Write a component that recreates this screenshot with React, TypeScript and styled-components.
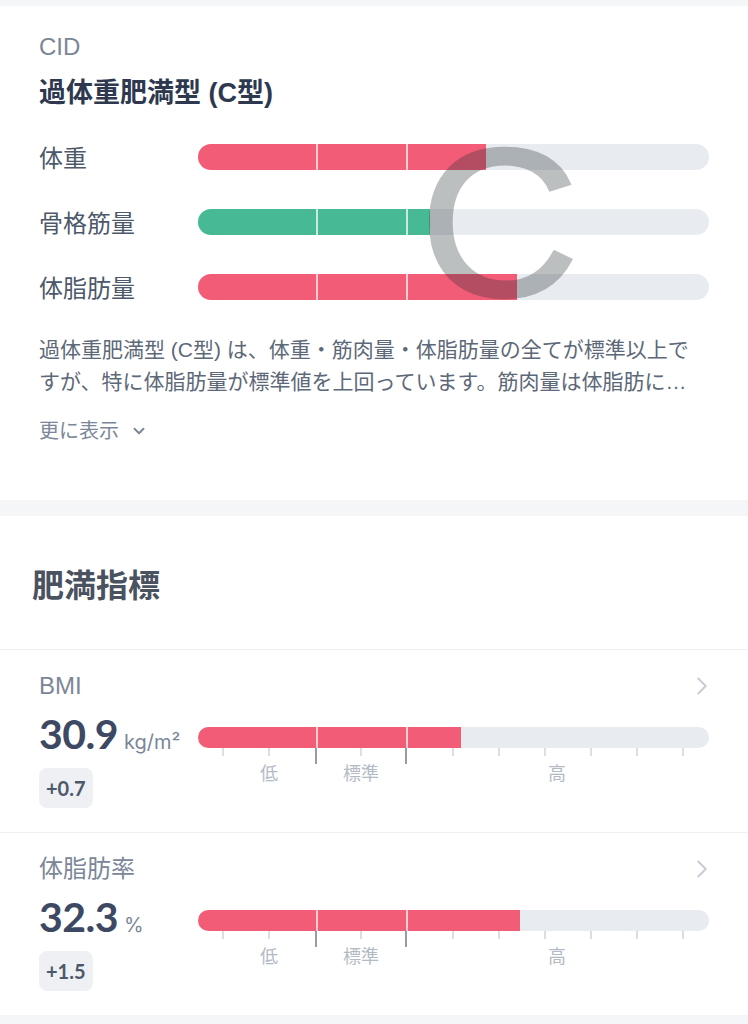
import React from "react";
import styled, { createGlobalStyle } from "styled-components";
import { ChevronDown, ChevronRight } from "lucide-react";

const JP = `"Liberation Sans", "Noto Sans CJK JP", sans-serif`;
const NUM = `Lato, "Liberation Sans", sans-serif`;

const GlobalStyle = createGlobalStyle`
  body {
    margin: 0;
    background: #f4f6f8;
    font-family: ${JP};
    -webkit-font-smoothing: antialiased;
  }
`;

const Page = styled.div`
  display: flex;
  flex-direction: column;
  gap: 16px;
  padding-top: 6px;
`;

const Card = styled.section`
  background: #ffffff;
  padding: 26px 39px 54px;
`;

const Caption = styled.div`
  font-size: 24px;
  line-height: 30px;
  color: #7b8798;
`;

const TypeTitle = styled.h2`
  margin: 13px 0 0;
  font-size: 27px;
  line-height: 36px;
  font-weight: 700;
  color: #2e3950;
`;

const BarList = styled.div`
  position: relative;
  margin-top: 13px;
  display: grid;
  grid-template-columns: 159px 1fr;
  grid-auto-rows: 65px;
  align-items: center;
`;

const BarLabel = styled.div`
  font-size: 24px;
  color: #4d586a;
`;

const Track = styled.div<{ $h: number }>`
  position: relative;
  height: ${(p) => p.$h}px;
  border-radius: ${(p) => p.$h / 2}px;
  background: #e8ebf0;
  overflow: hidden;
`;

const Fill = styled.div<{ $color: string }>`
  height: 100%;
  background: ${(p) => p.$color};
`;

const Split = styled.span`
  position: absolute;
  top: 0;
  bottom: 0;
  width: 1.5px;
  background: rgba(255, 255, 255, 0.7);
`;

const BigLetter = styled.span`
  position: absolute;
  left: 380px;
  top: -7px;
  font-family: "Liberation Sans", sans-serif;
  font-size: 212px;
  line-height: 1;
  color: #262d33;
  -webkit-text-stroke: 2.5px #262d33;
  opacity: 0.3;
  transform: scaleX(1.05);
  transform-origin: left top;
  pointer-events: none;
`;

const Description = styled.p`
  margin: 15px 0 0;
  max-width: 662px;
  font-size: 21px;
  line-height: 32px;
  color: #5d6878;
  display: -webkit-box;
  -webkit-line-clamp: 2;
  -webkit-box-orient: vertical;
  overflow: hidden;
`;

const ShowMore = styled.div`
  margin-top: 18px;
  display: flex;
  align-items: center;
  gap: 11px;
  font-size: 20px;
  line-height: 30px;
  color: #7b8798;
`;

const HeadingCard = styled.section`
  background: #ffffff;
  height: 133px;
  padding: 0 32px;
  display: flex;
  align-items: center;
  border-bottom: 1px solid #eef0f3;
`;

const Heading = styled.h1`
  margin: 0;
  font-size: 32px;
  font-weight: 700;
  color: #4a5260;
`;

const Section = styled.div`
  display: flex;
  flex-direction: column;
`;

const MetricRow = styled.div`
  background: #ffffff;
  padding: 21px 39px 24px;
  & + & {
    border-top: 1px solid #eef0f3;
  }
`;

const MetricHeader = styled.div`
  display: flex;
  align-items: center;
  justify-content: space-between;
  height: 30px;
  font-size: 24px;
  line-height: 30px;
  color: #7b8798;
  svg {
    margin-right: -8px;
  }
`;

const MetricBody = styled.div`
  margin-top: 11px;
  display: grid;
  grid-template-columns: 159px 1fr;
  align-items: start;
`;

const Value = styled.div`
  height: 44px;
  display: flex;
  align-items: baseline;
  font-family: ${NUM};
  font-size: 41px;
  line-height: 44px;
  font-weight: 700;
  color: #3d4863;
  letter-spacing: -0.5px;
`;

const Unit = styled.span`
  margin-left: 6px;
  font-family: Inter, "Liberation Sans", sans-serif;
  font-size: 20px;
  line-height: 1;
  font-weight: 400;
  color: #7b8798;
  letter-spacing: 0;
`;

const Badge = styled.div`
  margin-top: 12px;
  display: flex;
  align-items: center;
  width: fit-content;
  height: 40px;
  padding: 0 7px;
  border-radius: 8px;
  background: #eef0f4;
  font-family: ${NUM};
  font-size: 20px;
  font-weight: 700;
  color: #4d586a;
`;

const Scale = styled.div`
  padding-top: 15px;
`;

const Ticks = styled.svg`
  display: block;
  width: 511px;
  height: 16px;
`;

const ZoneLabels = styled.div`
  position: relative;
  height: 24px;
  margin-top: -2px;
`;

const ZoneLabel = styled.span`
  position: absolute;
  top: 0;
  transform: translateX(-50%);
  font-size: 18px;
  line-height: 24px;
  color: #b3bac4;
  white-space: nowrap;
`;

const RED = "#f25c76";
const GREEN = "#48b995";
const SPLITS = [118, 208];
const TICKS = [25, 71, 118, 163, 208, 255, 301, 347, 393, 439, 485];
const ZONES = [
  { text: "低", x: 71 },
  { text: "標準", x: 163 },
  { text: "高", x: 359 },
];

function Bar({ h, value, color }: { h: number; value: number; color: string }) {
  return (
    <Track $h={h}>
      <Fill $color={color} style={{ width: `${(value / 511) * 100}%` }} />
      {SPLITS.map((s) => (
        <Split key={s} style={{ left: s }} />
      ))}
    </Track>
  );
}

const composition = [
  { label: "体重", value: 288, color: RED },
  { label: "骨格筋量", value: 232, color: GREEN },
  { label: "体脂肪量", value: 319, color: RED },
];

const metrics = [
  { label: "BMI", value: "30.9", unit: "kg/m²", diff: "+0.7", fill: 263 },
  { label: "体脂肪率", value: "32.3", unit: "%", diff: "+1.5", fill: 322 },
];

function Metric({ m }: { m: (typeof metrics)[number] }) {
  return (
    <MetricRow>
      <MetricHeader>
        <span>{m.label}</span>
        <ChevronRight size={30} strokeWidth={1.6} color="#c9cdd3" />
      </MetricHeader>
      <MetricBody>
        <div>
          <Value>
            {m.value}
            <Unit>{m.unit}</Unit>
          </Value>
          <Badge>{m.diff}</Badge>
        </div>
        <Scale>
          <Bar h={21} value={m.fill} color={RED} />
          <Ticks viewBox="0 0 511 16">
            {TICKS.map((t) => {
              const major = SPLITS.includes(t);
              return (
                <line
                  key={t}
                  x1={t}
                  x2={t}
                  y1={0}
                  y2={major ? 16 : 8}
                  stroke={major ? "#5d6678" : "#c8cdd4"}
                  strokeWidth={1.3}
                />
              );
            })}
          </Ticks>
          <ZoneLabels>
            {ZONES.map((z) => (
              <ZoneLabel key={z.text} style={{ left: z.x }}>
                {z.text}
              </ZoneLabel>
            ))}
          </ZoneLabels>
        </Scale>
      </MetricBody>
    </MetricRow>
  );
}

export default function App() {
  return (
    <>
      <GlobalStyle />
      <Page>
        <Card>
          <Caption>CID</Caption>
          <TypeTitle>過体重肥満型 (C型)</TypeTitle>
          <BarList>
            {composition.map((c) => (
              <React.Fragment key={c.label}>
                <BarLabel>{c.label}</BarLabel>
                <Bar h={26} value={c.value} color={c.color} />
              </React.Fragment>
            ))}
            <BigLetter>C</BigLetter>
          </BarList>
          <Description>
            過体重肥満型 (C型) は、体重・筋肉量・体脂肪量の全てが標準以上ですが、特に体脂肪量が標準値を上回っています。筋肉量は体脂肪に…
          </Description>
          <ShowMore>
            更に表示
            <ChevronDown size={18} strokeWidth={2.6} />
          </ShowMore>
        </Card>
        <Section>
          <HeadingCard>
            <Heading>肥満指標</Heading>
          </HeadingCard>
          {metrics.map((m) => (
            <Metric key={m.label} m={m} />
          ))}
        </Section>
        <div style={{ height: 8 }} />
      </Page>
    </>
  );
}
